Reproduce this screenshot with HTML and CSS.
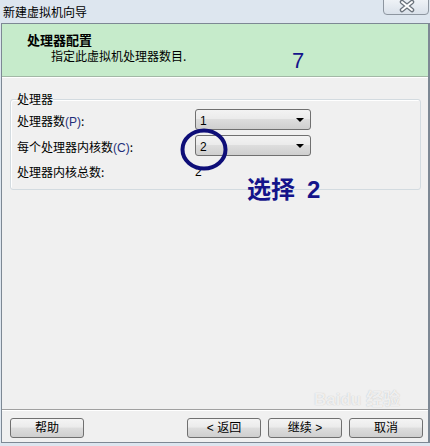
FILE: index.html
```html
<!DOCTYPE html>
<html lang="zh-CN">
<head>
  <meta charset="UTF-8" />
  <title>新建虚拟机向导</title>
  <link rel="stylesheet" href="styles.css">
</head>
<body>
  <div class="window">
    <div class="titlebar">
      <span class="title">新建虚拟机向导</span>
      <div class="close">
        <svg viewBox="0 0 46 17" width="46" height="17">
          <path d="M18,3 L28,11 M28,3 L18,11" stroke="#6b737c" stroke-width="4.5" stroke-linecap="round"/>
          <path d="M18,3 L28,11 M28,3 L18,11" stroke="#ffffff" stroke-width="2" stroke-linecap="round"/>
        </svg>
      </div>
    </div>

    <div class="client">
      <div class="header">
        <div class="header-title">处理器配置</div>
        <div class="header-sub">指定此虚拟机处理器数目.</div>
      </div>

      <div class="main">
        <fieldset class="group">
          <legend>处理器</legend>
          <div class="row">
            <span class="label">处理器数<span class="key">(P)</span>:</span>
            <div class="combo"><span>1</span><i class="arrow"></i></div>
          </div>
          <div class="row">
            <span class="label">每个处理器内核数<span class="key">(C)</span>:</span>
            <div class="combo"><span>2</span><i class="arrow"></i></div>
          </div>
          <div class="row row-total">
            <span class="label">处理器内核总数:</span>
            <span class="total">2</span>
          </div>
        </fieldset>
      </div>

      <div class="footer">
        <button class="btn">帮助</button>
        <button class="btn btn-back">&lt; 返回</button>
        <button class="btn">继续 &gt;</button>
        <button class="btn">取消</button>
      </div>
    </div>

    <!-- annotations drawn over the screenshot -->
    <div class="note note-step">7</div>
    <svg class="note-ring" viewBox="0 0 48 43" width="48" height="43">
      <ellipse cx="24" cy="21.5" rx="21.5" ry="19" fill="none" stroke="#0e0e78" stroke-width="4"/>
    </svg>
    <div class="note note-pick">选择<span class="pick-num">2</span></div>
    <div class="watermark">Bai<b>du</b> 经验</div>
  </div>
</body>
</html>
```

FILE: styles.css
```css
body {
  margin: 0;
  background: #dde6ef;
  font-family: "Liberation Sans", "Noto Sans CJK SC", sans-serif;
  font-size: 12px;
  color: #000;
}
.window {
  position: relative;
  width: 430px;
  height: 446px;
  display: flex;
  flex-direction: column;
  background: #dde6ef;
  padding-bottom: 3px;
  box-sizing: border-box;
}
.titlebar {
  height: 23px;
  display: flex;
  align-items: flex-start;
  justify-content: space-between;
  flex-shrink: 0;
}
.title {
  padding: 5px 0 0 3px;
  line-height: 13px;
  font-family: "Noto Sans CJK SC", sans-serif;
}
.close {
  width: 46px;
  height: 16px;
  margin: -1px 1px 0 0;
  border: 1px solid #8d96a0;
  border-radius: 0 0 4px 4px;
  background: linear-gradient(#eef2f6, #d9e1ea);
  box-sizing: border-box;
}
.close svg {
  display: block;
  margin-top: -1px;
}
.client {
  flex: 1;
  display: flex;
  flex-direction: column;
  margin-left: 1px;
  border: 1px solid #7d8894;
  border-right-width: 2px;
  background: #f0f0f0;
}
.header {
  height: 53px;
  background: #c6ebcb;
  border-bottom: 1px solid #a3b8a6;
  box-shadow: 0 1px 0 #ffffff;
  box-sizing: border-box;
  padding: 9px 0 0 25px;
  font-family: "Noto Sans CJK SC", sans-serif;
}
.header-title {
  font-size: 13px;
  font-weight: bold;
  line-height: 13px;
}
.header-sub {
  margin: 4px 0 0 24px;
  line-height: 12px;
}
.main {
  flex: 1;
  padding-top: 16px;
}
.group {
  margin: 0 7px 0 8px;
  padding: 4px 6px 10px 6px;
  border: 1px solid #d3dbe0;
  border-radius: 3px;
  box-shadow: inset 1px 1px 0 #ffffff;
  display: flex;
  flex-direction: column;
  gap: 5px;
}
.group legend {
  padding: 0;
  line-height: 12px;
  font-family: "Noto Sans CJK SC", sans-serif;
}
.row {
  display: flex;
  align-items: center;
  height: 21px;
}
.row-total {
  height: 18px;
}
.label {
  width: 178px;
  padding-top: 3px;
  line-height: 12px;
  font-family: "Noto Sans CJK SC", sans-serif;
}
.key {
  font-family: "Liberation Sans", sans-serif;
  color: #1f2f7a;
}
.combo {
  width: 116px;
  height: 21px;
  box-sizing: border-box;
  border: 1px solid #707070;
  border-radius: 3px;
  background: linear-gradient(#f3f3f3 0%, #ebebeb 45%, #dddddd 50%, #cfcfcf 100%);
  display: flex;
  align-items: center;
  justify-content: space-between;
  padding: 3px 6px 0 4px;
  line-height: 12px;
}
.arrow {
  width: 0;
  height: 0;
  border-left: 4px solid transparent;
  border-right: 4px solid transparent;
  border-top: 4px solid #000;
  margin-top: -2px;
}
.total {
  padding-top: 4px;
  line-height: 12px;
}
.footer {
  display: flex;
  gap: 7px;
  border-top: 1px solid #a0a0a0;
  box-shadow: inset 0 1px 0 #ffffff;
  padding: 8px 5px 4px 8px;
}
.btn {
  width: 74px;
  height: 20px;
  margin: 0;
  padding: 0;
  border: 1px solid #707070;
  border-radius: 3px;
  background: linear-gradient(#f4f4f4 0%, #ebebeb 45%, #dddddd 50%, #cfcfcf 100%);
  font-family: "Liberation Sans", "Noto Sans CJK SC", sans-serif;
  font-size: 12px;
  line-height: 12px;
  color: #000;
}
.btn-back {
  margin-left: auto;
}
.note {
  position: absolute;
  color: #14148a;
}
.note-step {
  left: 292px;
  top: 50px;
  font-size: 22px;
  line-height: 22px;
}
.note-ring {
  position: absolute;
  left: 180px;
  top: 128px;
}
.note-pick {
  left: 247px;
  top: 176px;
  font-family: "Noto Sans CJK SC", sans-serif;
  font-size: 24px;
  font-weight: bold;
  line-height: 24px;
}
.pick-num {
  margin-left: 12px;
  font-family: "Liberation Sans", sans-serif;
}
.watermark {
  position: absolute;
  left: 314px;
  top: 391px;
  color: rgba(255, 255, 255, 0.75);
  text-shadow: 0 0 1px rgba(120, 120, 120, 0.45);
  font-family: "Liberation Sans", "Noto Sans CJK SC", sans-serif;
  font-size: 17px;
  font-weight: bold;
  line-height: 18px;
  pointer-events: none;
}
```
